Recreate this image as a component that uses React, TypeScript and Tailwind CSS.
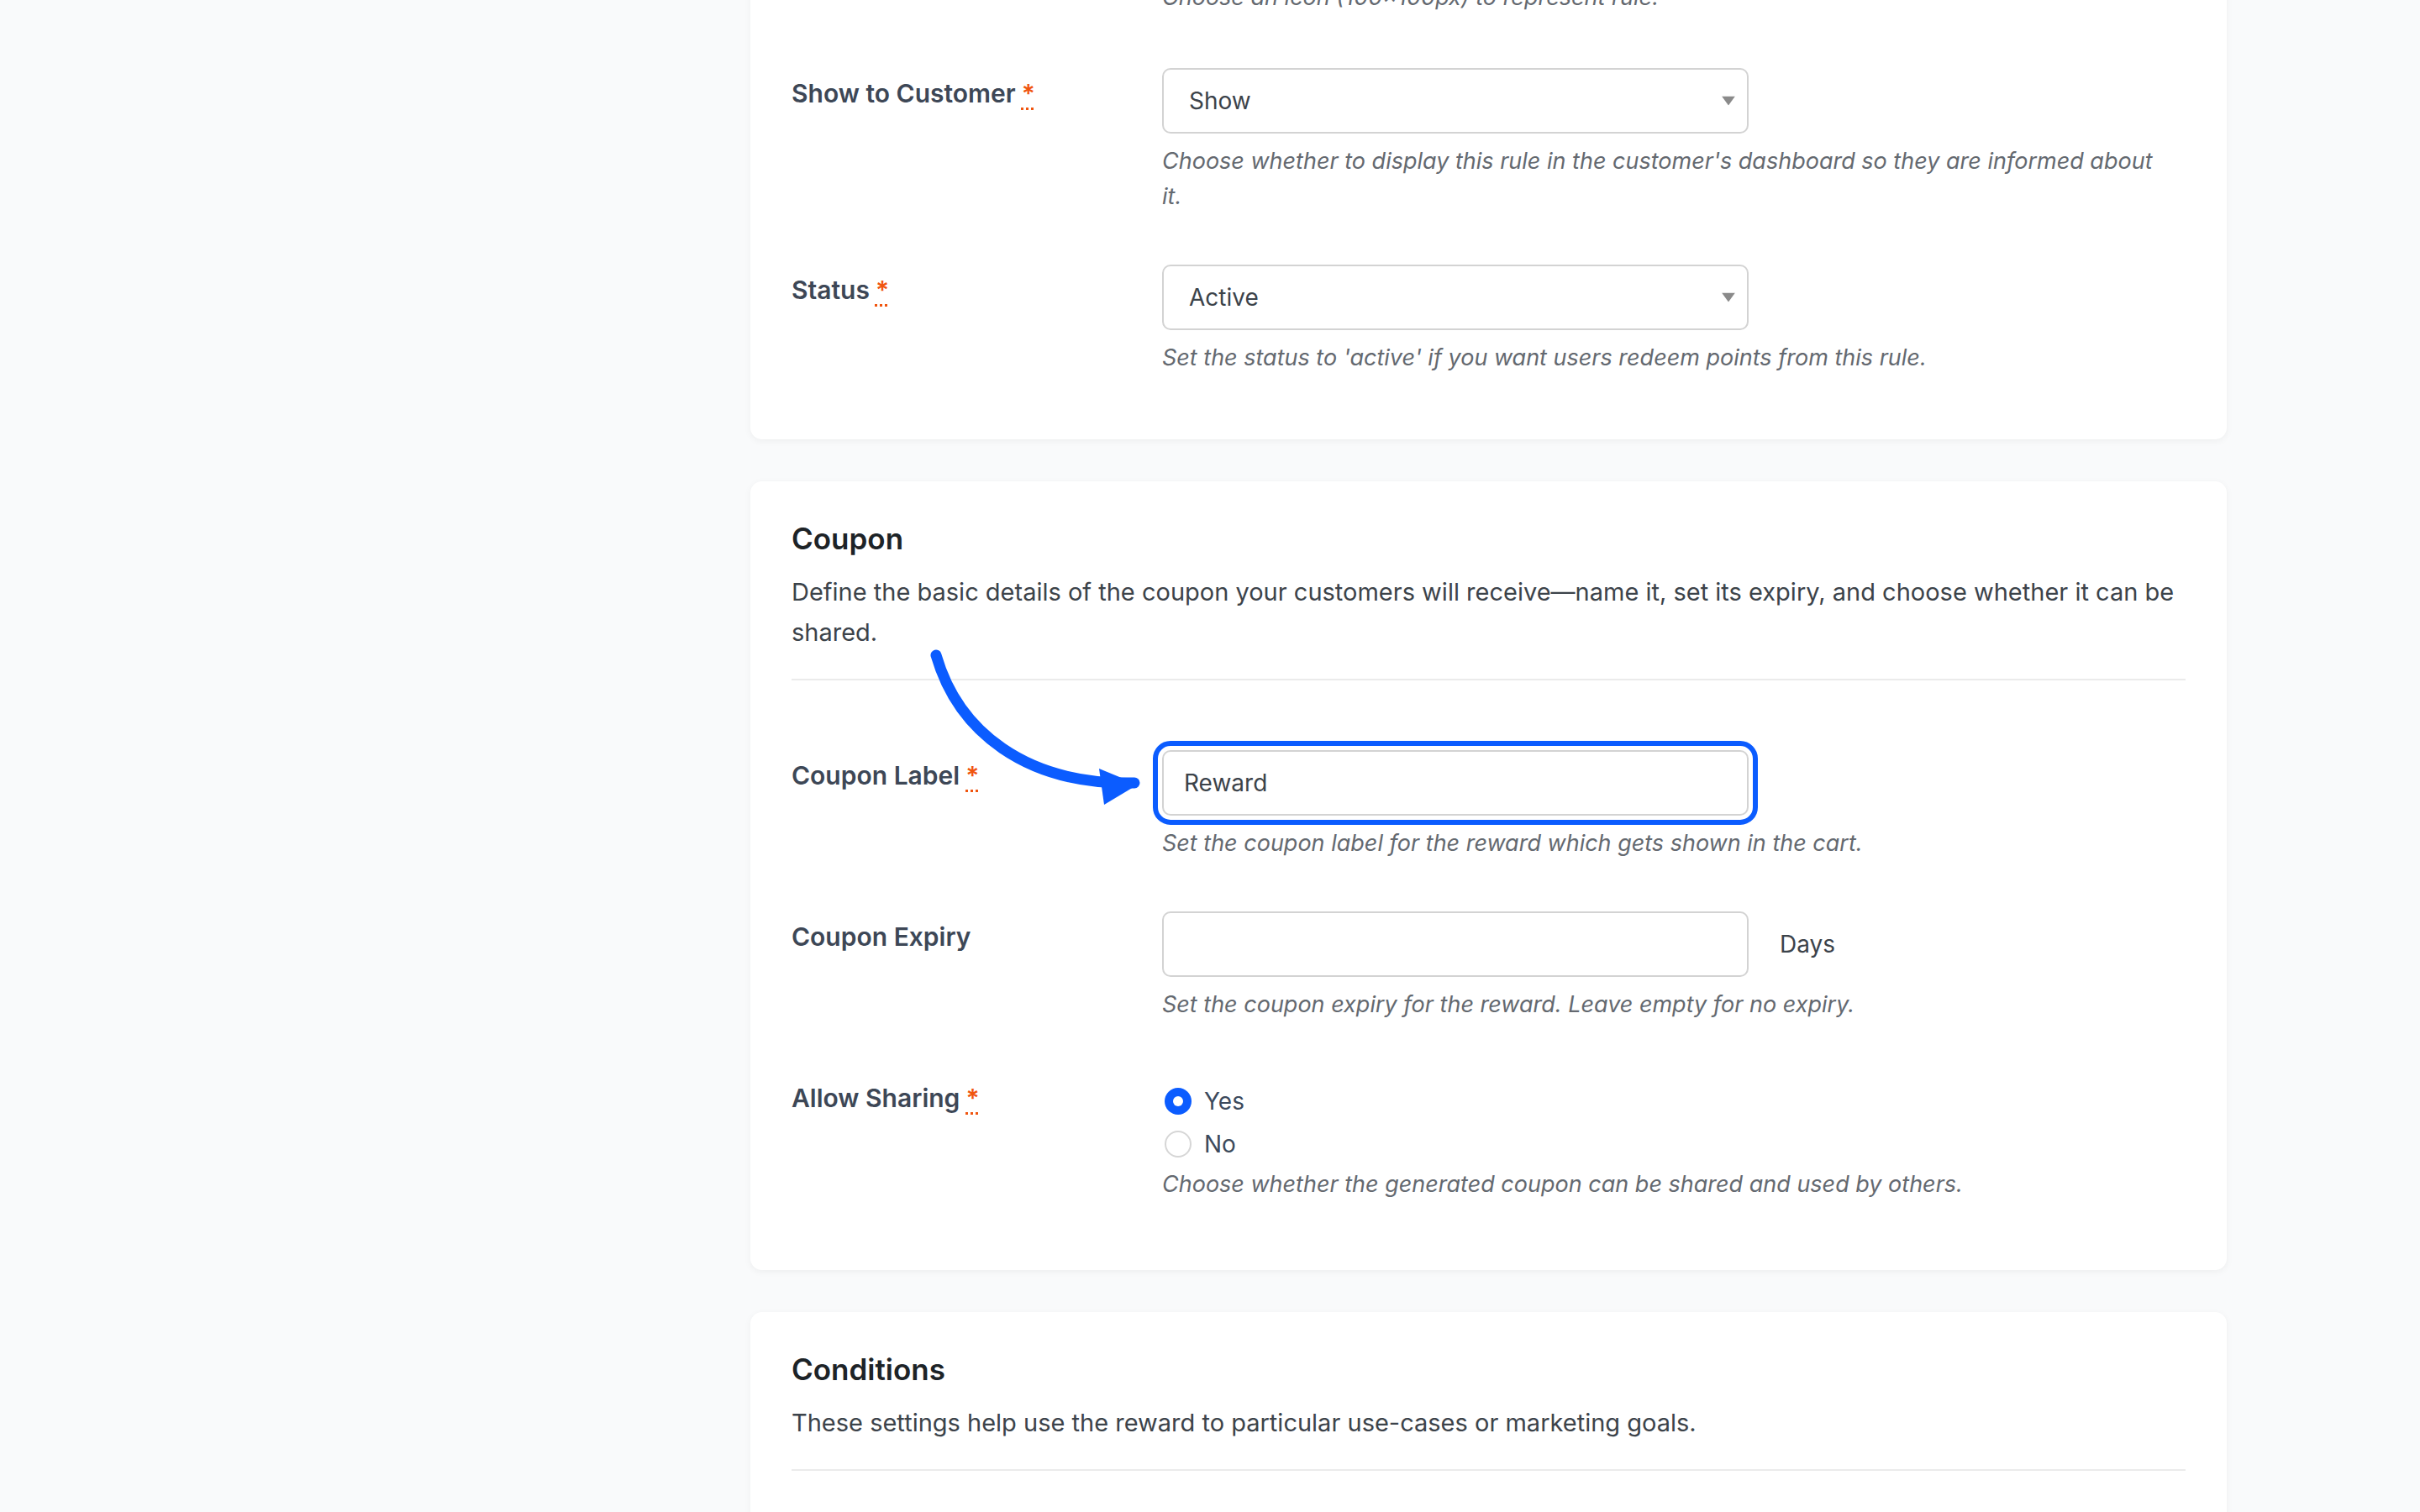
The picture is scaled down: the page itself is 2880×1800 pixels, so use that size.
import type { ReactNode } from "react";

const BLUE = "#0b5cff";

function Required() {
  return (
    <abbr title="required" className="ml-[7px] text-[#f0550f] no-underline">
      <span className="underline decoration-dotted decoration-[3px] underline-offset-[6px]">*</span>
    </abbr>
  );
}

function Field({
  label,
  required,
  children,
}: {
  label: string;
  required?: boolean;
  children: ReactNode;
}) {
  return (
    <div className="grid grid-cols-[441px_1fr] py-[30px]">
      <div className="pt-[9px] text-[30px] leading-[42px] font-semibold text-[#3d4756]">
        {label}
        {required && <Required />}
      </div>
      <div className="pr-[20px]">{children}</div>
    </div>
  );
}

function Hint({ children }: { children: ReactNode }) {
  return <p className="mt-[12px] text-[27px] leading-[42px] italic text-[#646970]">{children}</p>;
}

function Select({ value }: { value: string }) {
  return (
    <div className="relative flex h-[78px] w-[698px] items-center rounded-[10px] border-2 border-[#d3d3d3] bg-white pl-[30px] text-[28px] text-[#3c434a]">
      {value}
      <svg className="absolute right-[14px] top-1/2 -translate-y-1/2" width="16" height="11" viewBox="0 0 16 11">
        <path d="M0 0h16L8 11z" fill="#8a8a8a" />
      </svg>
    </div>
  );
}

function TextInput({ value, highlight }: { value?: string; highlight?: boolean }) {
  return (
    <div
      className={
        "flex h-[78px] w-[698px] items-center rounded-[10px] border-2 border-[#d3d3d3] bg-white pl-[24px] text-[28px] text-[#3c434a]" +
        (highlight ? " outline-solid outline-[6px] outline-offset-[5px] outline-[#0b5cff]" : "")
      }
    >
      {value}
    </div>
  );
}

function Radio({ label, checked }: { label: string; checked?: boolean }) {
  return (
    <label className="flex h-[51px] items-center gap-[15px] pl-[3px] text-[28px] text-[#3c4a5c]">
      {checked ? (
        <span className="flex h-[32px] w-[32px] items-center justify-center rounded-full bg-[#0b5cff]">
          <span className="h-[12px] w-[12px] rounded-full bg-white" />
        </span>
      ) : (
        <span className="h-[32px] w-[32px] rounded-full border-2 border-[#d6d6d6] bg-white" />
      )}
      {label}
    </label>
  );
}

function CardHeader({ title, text }: { title: string; text: string }) {
  return (
    <div>
      <h2 className="text-[35px] leading-[48px] font-semibold text-[#1d2327]">{title}</h2>
      <p className="mt-[16px] text-[29px] leading-[48px] text-[#3c434a]">{text}</p>
      <hr className="mt-[31px] border-t-2 border-[#ebebeb]" />
    </div>
  );
}

export default function App() {
  return (
    <div className="relative h-[1800px] overflow-hidden bg-[#f9fafb] font-['Inter',sans-serif]">
      <div className="-mt-[24px] ml-[893px] flex w-[1757px] flex-col gap-[50px]">
        <section className="rounded-b-[14px] bg-white px-[49px] pb-[46px] shadow-[0_2px_8px_rgba(0,0,0,0.05)]">
          <div className="mb-[33px] grid grid-cols-[441px_1fr]">
            <div />
            <p className="text-[27px] leading-[42px] italic text-[#646970]">
              Choose an icon (100x100px) to represent rule.
            </p>
          </div>
          <Field label="Show to Customer" required>
            <Select value="Show" />
            <Hint>
              Choose whether to display this rule in the customer's dashboard so they are informed about it.
            </Hint>
          </Field>
          <Field label="Status" required>
            <Select value="Active" />
            <Hint>Set the status to 'active' if you want users redeem points from this rule.</Hint>
          </Field>
        </section>

        <section className="rounded-[14px] bg-white px-[49px] pt-[44px] pb-[51px] shadow-[0_2px_8px_rgba(0,0,0,0.05)]">
          <CardHeader
            title="Coupon"
            text="Define the basic details of the coupon your customers will receive—name it, set its expiry, and choose whether it can be shared."
          />
          <div className="pt-[53px]">
            <Field label="Coupon Label" required>
              <TextInput value="Reward" highlight />
              <Hint>Set the coupon label for the reward which gets shown in the cart.</Hint>
            </Field>
            <Field label="Coupon Expiry">
              <div className="flex items-center gap-[37px]">
                <TextInput />
                <span className="text-[28px] text-[#3c434a]">Days</span>
              </div>
              <Hint>Set the coupon expiry for the reward. Leave empty for no expiry.</Hint>
            </Field>
            <Field label="Allow Sharing" required>
              <div className="pt-[8px]">
                <Radio label="Yes" checked />
                <Radio label="No" />
              </div>
              <p className="mt-[2px] text-[27px] leading-[42px] italic text-[#646970]">
                Choose whether the generated coupon can be shared and used by others.
              </p>
            </Field>
          </div>
        </section>

        <section className="rounded-t-[14px] bg-white px-[49px] pt-[44px] pb-[200px] shadow-[0_2px_8px_rgba(0,0,0,0.05)]">
          <CardHeader
            title="Conditions"
            text="These settings help use the reward to particular use-cases or marketing goals."
          />
        </section>
      </div>

      {/* annotation arrow pointing at the coupon label field */}
      <svg className="pointer-events-none absolute left-0 top-0" width="2880" height="1800" viewBox="0 0 2880 1800">
        <path
          d="M1114 780 C1140 870 1220 935 1350 932"
          fill="none"
          stroke={BLUE}
          strokeWidth="13"
          strokeLinecap="round"
        />
        <path d="M1308 915 L1314 958 L1354 934 Z" fill={BLUE} />
      </svg>
    </div>
  );
}
